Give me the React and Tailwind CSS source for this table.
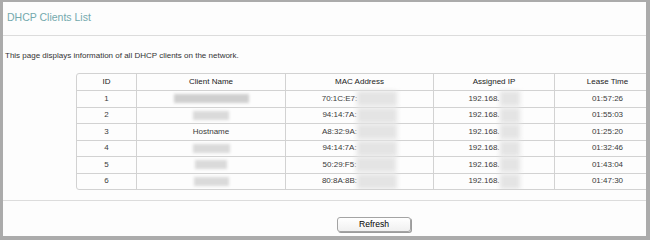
import React from "react";

const rows = [
  { id: "1", name: null, nameW: 75, mac: "70:1C:E7:", ip: "192.168.", lease: "01:57:26", dark: true },
  { id: "2", name: null, nameW: 36, mac: "94:14:7A:", ip: "192.168.", lease: "01:55:03" },
  { id: "3", name: "Hostname", nameW: 0, mac: "A8:32:9A:", ip: "192.168.", lease: "01:25:20" },
  { id: "4", name: null, nameW: 37, mac: "94:14:7A:", ip: "192.168.", lease: "01:32:46" },
  { id: "5", name: null, nameW: 32, mac: "50:29:F5:", ip: "192.168.", lease: "01:43:04" },
  { id: "6", name: null, nameW: 35, mac: "80:8A:8B:", ip: "192.168.", lease: "01:47:30" },
];

const grid = "grid grid-cols-[59px_149px_148px_121px_106px]";

export default function App() {
  return (
    <div
      className="w-[650px] h-[240px] bg-[#ababab] pt-[2px] pl-[3px] pr-[4px] pb-[4px]"
      style={{ fontFamily: '"Liberation Sans", Arial, sans-serif' }}
    >
      <div className="h-full bg-[#fdfdfd] flex flex-col overflow-hidden">
        <div className="h-[34px] shrink-0 border-b border-[#dcdcdc] pl-[4px] pt-[9px]">
          <div className="text-[10.5px] leading-[12px] text-[#74a9ad]">DHCP Clients List</div>
        </div>
        <div className="mt-[15px] pl-[2px] text-[8px] leading-[10px] text-[#333] whitespace-nowrap">
          This page displays information of all DHCP clients on the network.
        </div>
        <div className="mt-[12px] ml-[73px] w-[583px] shrink-0 border border-[#d2d2d2] rounded-[3px] text-[8px] overflow-hidden">
          <div className={`${grid} h-[16px] text-[#222]`}>
            <div className="flex items-center justify-center">ID</div>
            <div className="flex items-center justify-center border-l border-[#d2d2d2]">Client Name</div>
            <div className="flex items-center justify-center border-l border-[#d2d2d2]">MAC Address</div>
            <div className="flex items-center justify-center border-l border-[#d2d2d2]">Assigned IP</div>
            <div className="flex items-center justify-center border-l border-[#d2d2d2]">Lease Time</div>
          </div>
          {rows.map((r) => (
            <div key={r.id} className={`${grid} h-[16.5px] border-t border-[#d2d2d2] text-[#3a3a3a]`}>
              <div className="flex items-center justify-center">{r.id}</div>
              <div className="flex items-center justify-center border-l border-[#d2d2d2]">
                {r.name ? (
                  <span>{r.name}</span>
                ) : (
                  <span
                    className={`inline-block h-[9px] blur-[1.5px] ${r.dark ? "bg-[#cfcfcf]" : "bg-[#dadada]"}`}
                    style={{ width: r.nameW }}
                  />
                )}
              </div>
              <div className="flex items-center justify-center border-l border-[#d2d2d2]">
                <span>{r.mac}</span>
                <span className="inline-block w-[40px] h-[15px] bg-[#e4e4e4] blur-[2px]" />
              </div>
              <div className="flex items-center justify-center border-l border-[#d2d2d2]">
                <span>{r.ip}</span>
                <span className="inline-block w-[20px] h-[15px] bg-[#e4e4e4] blur-[2px]" />
              </div>
              <div className="flex items-center justify-center border-l border-[#d2d2d2]">{r.lease}</div>
            </div>
          ))}
        </div>
        <div className="mt-[10px] shrink-0 border-t border-[#dcdcdc]" />
        <div className="mt-[16px] pl-[334px]">
          <button className="w-[74px] h-[15px] border border-[#a4a4a4] rounded-[3px] bg-gradient-to-b from-white to-[#f0f0f0] shadow-[1px_1px_0_#9c9c9c] text-[8.6px] leading-[13px] text-black flex items-center justify-center">
            Refresh
          </button>
        </div>
      </div>
    </div>
  );
}
